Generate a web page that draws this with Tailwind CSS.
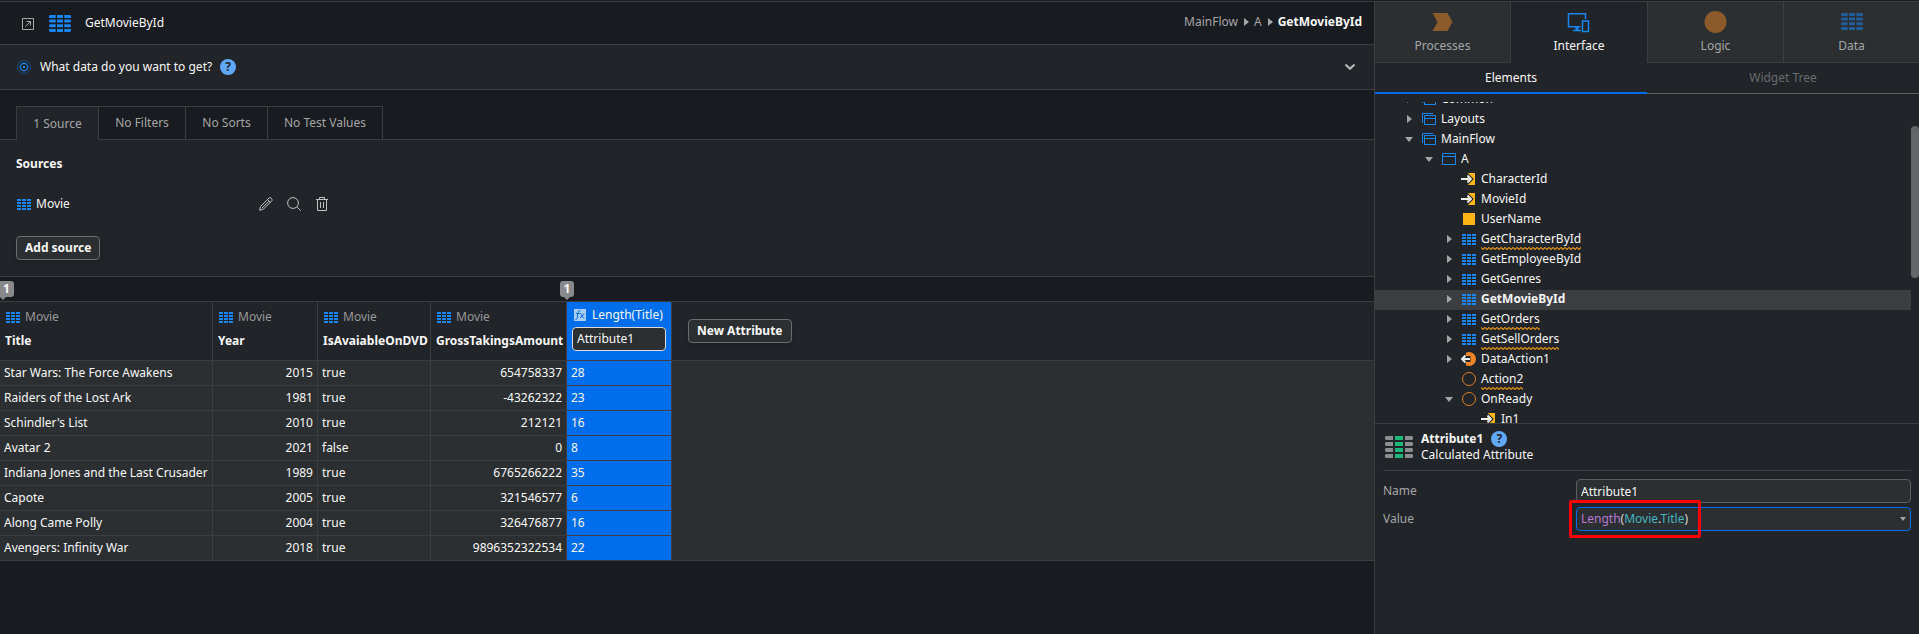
<!DOCTYPE html>
<html lang="en">
<head>
<meta charset="utf-8">
<title>GetMovieById</title>
<script src="https://cdn.jsdelivr.net/npm/@tailwindcss/browser@4"></script>
</head>
<body class="bg-[#181b1f] font-['Noto_Sans',sans-serif] text-xs leading-4 text-[#f8f8f8]">

<svg class="absolute size-0" aria-hidden="true">
  <symbol id="grid" viewBox="0 0 14 11" preserveAspectRatio="none">
    <path d="M0 0h4v2H0zM5 0h4v2H5zM10 0h4v2h-4zM0 3h4v2H0zM5 3h4v2H5zM10 3h4v2h-4zM0 6h4v2H0zM5 6h4v2H5zM10 6h4v2h-4zM0 9h4v2H0zM5 9h4v2H5zM10 9h4v2h-4z" fill="currentColor"/>
  </symbol>
  <symbol id="grid-lg" viewBox="0 0 22 17">
    <g fill="currentColor">
      <path d="M1 0h5.700v3H0V1zM8 0h6v3H8zM15.300 0H21l1 1v2h-6.700zM0 14h6.700v3H1l-1-1zM8 14h6v3H8zM15.300 14H22v2l-1 1h-5.700z"/>
      <path d="M0 5.500l1-1h5.700v3H1l-1-1zM8 4.500h6v3H8zM15.300 4.500H21l1 1v1l-1 1h-5.700zM0 10.300l1-1h5.700v3H1l-1-1zM8 9.300h6v3H8zM15.300 9.300H21l1 1v1l-1 1h-5.700z"/>
    </g>
  </symbol>
  <symbol id="flow" viewBox="0 0 14 14"><path d="M.5 11V1.500H11M2.500 3.500h11v9h-11zM2.500 6.500h11" fill="none" stroke="#1a86f2"/></symbol>
  <symbol id="screen" viewBox="0 0 14 14"><path d="M.5 1.500h13v11H.5zM.5 4.500h13" fill="none" stroke="#1a86f2"/></symbol>
  <symbol id="input" viewBox="0 0 14 14" overflow="visible">
    <path d="M5 1h8v12H5z" fill="#fdb515"/>
    <path d="M4.500 2 9.500 7l-5 5" fill="none" stroke="#212428" stroke-width="3.200"/>
    <path d="M-1 7h10M5.500 3.500 9 7l-3.500 3.500" fill="none" stroke="#f0f0f0" stroke-width="1.800"/>
  </symbol>
  <symbol id="local" viewBox="0 0 14 14"><path d="M1 1h12v12H1z" fill="#fdb515"/></symbol>
  <symbol id="dataaction" viewBox="0 0 14 14" overflow="visible">
    <circle cx="7" cy="7" r="7" fill="#f08426"/>
    <path d="M-2 0h6v4h4.500v6H4v4h-6z" fill="#212428"/>
    <path d="M0 7h8M3.500 3.500 0 7l3.500 3.500" fill="none" stroke="#f0f0f0" stroke-width="2"/>
  </symbol>
  <symbol id="action" viewBox="0 0 14 14"><circle cx="7" cy="7" r="6.500" fill="none" stroke="#e07f28"/></symbol>
  <symbol id="closed" viewBox="0 0 8 8"><path d="M2 0l5 4-5 4z" fill="#a5a6a8"/></symbol>
  <symbol id="open" viewBox="0 0 8 8"><path d="M0 2h8L4 7z" fill="#a5a6a8"/></symbol>
  <pattern id="wave" width="4" height="3" patternUnits="userSpaceOnUse"><path d="M-1 -.5l3 3 3-3" fill="none" stroke="#d98b18" stroke-width="1.200"/></pattern>
</svg>

<div class="flex h-screen border-t border-[#181b1f]">
  <main class="min-w-0 flex-1 border-t border-[#3c3d40]">
    <header class="flex h-[43px] items-center border-b border-[#3c3d40] pr-3 pl-[22px]">
      <button aria-label="Collapse" class="mt-px"><svg class="size-3" viewBox="0 0 12 12" fill="none" stroke="#a5a6a8"><path d="M.5.5h11v11H.5zM3.500 8.500l5-5M4.500 3.500h4v4"/></svg></button>
      <svg class="ml-[15px] h-[17px] w-[22px] text-[#1a86f2]"><use href="#grid-lg"/></svg>
      <h1 class="ml-3.5">GetMovieById</h1>
      <nav class="ml-auto flex items-center gap-1 pb-0.5 text-[#a5a6a8]" aria-label="Breadcrumb">
        <a href="#">MainFlow</a>
        <svg class="size-2"><use href="#closed"/></svg>
        <a href="#">A</a>
        <svg class="size-2"><use href="#closed"/></svg>
        <a href="#" class="font-bold text-[#f8f8f8]">GetMovieById</a>
      </nav>
    </header>

    <section class="flex h-[45px] items-center border-b border-[#3c3d40] bg-[#212428] pr-[18px] pl-[17px]">
      <svg class="size-3.5" viewBox="0 0 14 14" fill="none" stroke="#1a86f2"><circle cx="7" cy="7" r="6.500" opacity=".45"/><circle cx="7" cy="7" r="3.700" stroke-width="1.200"/><circle cx="7" cy="7" r="1.200" fill="#1a86f2" stroke="none"/></svg>
      <h2 class="ml-[9px]">What data do you want to get?</h2>
      <button aria-label="Help" class="ml-2 size-4 rounded-full bg-[#62a8f8] font-bold text-[#212428]">?</button>
      <button aria-label="Expand" class="ml-auto"><svg class="h-2 w-3" viewBox="0 0 12 8" fill="none" stroke="#b4b5b7" stroke-width="2.200"><path d="M1.500 1.500 6 5.800l4.500-4.300"/></svg></button>
    </section>

    <div class="flex h-[50px] items-end pt-4 text-[#a5a6a8]" role="tablist">
      <div class="h-px w-4 bg-[#3c3d40]"></div>
      <button role="tab" aria-selected="true" class="h-[34px] w-[82px] border-t border-l border-[#3c3d40] bg-[#212428]">1 Source</button>
      <button role="tab" class="h-[34px] w-[87px] border border-r-0 border-[#3c3d40]">No Filters</button>
      <button role="tab" class="h-[34px] w-[82px] border border-r-0 border-[#3c3d40]">No Sorts</button>
      <button role="tab" class="h-[34px] w-[116px] border border-[#3c3d40]">No Test Values</button>
      <div class="h-px flex-1 bg-[#3c3d40]"></div>
    </div>

    <section class="border-b border-[#3c3d40] bg-[#212428] px-4 pt-4 pb-4">
      <h3 class="font-bold">Sources</h3>
      <div class="mt-6 flex h-4 items-center">
        <svg class="ml-px h-[11px] w-3.5 text-[#1a86f2]"><use href="#grid"/></svg>
        <span class="ml-[5px] w-[223px]">Movie</span>
        <span class="flex gap-3.5 text-[#c0c1c3]">
          <button aria-label="Edit"><svg class="size-3.5" viewBox="0 0 14 14" fill="none" stroke="currentColor"><path d="M.7 13.300l.8-3.800L10 1q1-1 2.200.2t.8 2.400l-8.500 8.500zM8.500 2.500l3 3M10 4.200l-7 7"/></svg></button>
          <button aria-label="Preview"><svg class="size-3.5" viewBox="0 0 14 14" fill="none" stroke="currentColor"><circle cx="6" cy="6" r="5.400"/><path d="M9.900 9.900l3.700 3.700"/></svg></button>
          <button aria-label="Delete"><svg class="size-3.5" viewBox="0 0 14 14" fill="none" stroke="currentColor"><path d="M1 2.500h12M2.500 2.500v11h9v-11M4.500 2.500v-2h5v2M5.500 5v6M8.500 5v6"/></svg></button>
        </span>
      </div>
      <button class="mt-6 h-6 rounded border border-[#6a6c6e] bg-[#2b2f31] px-2 font-bold shadow-md">Add source</button>
    </section>

    <div class="relative h-[25px] border-b border-[#3c3d40]">
      <div class="absolute top-1 left-0 h-5 w-3.5">
        <svg class="absolute inset-0 h-5 w-3.5" viewBox="0 0 14 20"><path d="M0 0h10.500q3.500 0 3.500 3v10q0 3-3 3H6l-3 3-3-3z" fill="#87898c"/></svg>
        <span class="relative block pr-px text-center font-bold">1</span>
      </div>
      <div class="absolute top-1 left-[560px] h-5 w-3.5">
        <svg class="absolute inset-0 h-5 w-3.5" viewBox="0 0 14 20"><path d="M3 0h8q3 0 3 3v10q0 3-3 3h-1l-3 3-3-3H3q-3 0-3-3V3q0-3 3-3z" fill="#87898c"/></svg>
        <span class="relative block text-center font-bold">1</span>
      </div>
    </div>

    <table class="w-full table-fixed border-separate border-spacing-0 [&_td]:border-r [&_td]:border-b [&_td]:border-[#3c3d40] [&_td]:px-1 [&_th]:border-b [&_th]:border-[#3c3d40]">
      <colgroup><col class="w-[213px]"><col class="w-[105px]"><col class="w-[113px]"><col class="w-[136px]"><col class="w-[105px]"><col></colgroup>
      <thead class="bg-[#212428] text-left align-top">
        <tr class="h-[59px]">
          <th class="border-r px-[5px] pt-[7px]"><div class="flex items-center gap-[5px] pl-px font-normal text-[#97989a]"><svg class="h-[11px] w-3.5 text-[#1a86f2]"><use href="#grid"/></svg>Movie</div><div class="mt-2">Title</div></th>
          <th class="border-r px-[5px] pt-[7px]"><div class="flex items-center gap-[5px] pl-px font-normal text-[#97989a]"><svg class="h-[11px] w-3.5 text-[#1a86f2]"><use href="#grid"/></svg>Movie</div><div class="mt-2">Year</div></th>
          <th class="border-r px-[5px] pt-[7px]"><div class="flex items-center gap-[5px] pl-px font-normal text-[#97989a]"><svg class="h-[11px] w-3.5 text-[#1a86f2]"><use href="#grid"/></svg>Movie</div><div class="mt-2">IsAvaiableOnDVD</div></th>
          <th class="border-r px-[5px] pt-[7px]"><div class="flex items-center gap-[5px] pl-px font-normal text-[#97989a]"><svg class="h-[11px] w-3.5 text-[#1a86f2]"><use href="#grid"/></svg>Movie</div><div class="mt-2">GrossTakingsAmount</div></th>
          <th class="border-r bg-[#006eea] px-[5px] pt-[5px] font-normal">
            <div class="flex items-center gap-1.5 pl-0.5"><svg class="size-3" viewBox="0 0 12 12" fill="none" stroke="#006eea"><path d="M0 0h12v12H0z" fill="#a9cdf8" stroke="none"/><path d="M1.500 10.500q1.200.3 1.600-1.300l1.100-5.700Q4.700 1 6.300 1.600M2 4.500h3.700M6.300 4.500q1-.3 1.400 1l.9 2.500q.5 1.300 1.700.8M10.300 4.500 6 9"/></svg>Length(Title)</div>
            <input aria-label="Attribute name" value="Attribute1" class="mt-1 block h-6 w-full rounded border border-[#d8dadd] bg-[#2b2f31] px-1 pb-0.5">
          </th>
          <th class="pt-[17px] pl-4"><button class="h-6 rounded border border-[#6a6c6e] bg-[#2b2f31] px-2 font-bold shadow-md">New Attribute</button></th>
        </tr>
      </thead>
      <tbody class="bg-[#2b2f31]">
        <tr class="h-[25px]"><td>Star Wars: The Force Awakens</td><td class="text-right">2015</td><td>true</td><td class="text-right">654758337</td><td class="bg-[#006eea]">28</td><td rowspan="8" class="border-r-0!"></td></tr>
        <tr class="h-[25px]"><td>Raiders of the Lost Ark</td><td class="text-right">1981</td><td>true</td><td class="text-right">-43262322</td><td class="bg-[#006eea]">23</td></tr>
        <tr class="h-[25px]"><td>Schindler's List</td><td class="text-right">2010</td><td>true</td><td class="text-right">212121</td><td class="bg-[#006eea]">16</td></tr>
        <tr class="h-[25px]"><td>Avatar 2</td><td class="text-right">2021</td><td>false</td><td class="text-right">0</td><td class="bg-[#006eea]">8</td></tr>
        <tr class="h-[25px]"><td class="whitespace-nowrap">Indiana Jones and the Last Crusader</td><td class="text-right">1989</td><td>true</td><td class="text-right">6765266222</td><td class="bg-[#006eea]">35</td></tr>
        <tr class="h-[25px]"><td>Capote</td><td class="text-right">2005</td><td>true</td><td class="text-right">321546577</td><td class="bg-[#006eea]">6</td></tr>
        <tr class="h-[25px]"><td>Along Came Polly</td><td class="text-right">2004</td><td>true</td><td class="text-right">326476877</td><td class="bg-[#006eea]">16</td></tr>
        <tr class="h-[25px]"><td>Avengers: Infinity War</td><td class="text-right">2018</td><td>true</td><td class="text-right">9896352322534</td><td class="bg-[#006eea]">22</td></tr>
      </tbody>
    </table>
  </main>

  <aside class="flex w-[545px] shrink-0 flex-col border-t border-l border-[#3c3d40] bg-[#212428]">
    <div class="grid h-[61px] shrink-0 grid-cols-4 text-[#a5a6a8]" role="tablist">
      <button role="tab" class="flex flex-col items-center border-r border-b border-[#3c3d40] bg-[#2b2f31] pt-2">
        <svg class="size-6" viewBox="0 0 24 24"><path d="M1.500 3h15l5 9-5 9h-15l5-9z" fill="#8d5a2c"/></svg><span class="mt-1">Processes</span></button>
      <button role="tab" aria-selected="true" class="flex flex-col items-center pt-2 text-[#f8f8f8]">
        <svg class="size-6" viewBox="0 0 24 24" fill="none" stroke="#1a86f2" stroke-width="1.500"><path d="M18.500 9V3.700H1.500v13h12M6 20.500h8"/><path d="M8.500 17h3v4h-3z" fill="#1a86f2" stroke="none"/><path d="M15.500 11h6v10.500h-6z"/></svg><span class="mt-1">Interface</span></button>
      <button role="tab" class="flex flex-col items-center border-b border-l border-[#3c3d40] bg-[#2b2f31] pt-2">
        <svg class="size-6" viewBox="0 0 24 24"><circle cx="11.500" cy="12" r="11" fill="#8d5a2c"/></svg><span class="mt-1">Logic</span></button>
      <button role="tab" class="flex flex-col items-center border-b border-l border-[#3c3d40] bg-[#2b2f31] pt-[11px]">
        <svg class="h-[17px] w-[22px] text-[#215d9b]"><use href="#grid-lg"/></svg><span class="mt-2">Data</span></button>
    </div>
    <div class="grid h-[31px] shrink-0 grid-cols-2" role="tablist">
      <button role="tab" aria-selected="true" class="border-b-2 border-[#006eea]">Elements</button>
      <button role="tab" class="border-b border-[#5c5e60] text-[#6a6c6e]">Widget Tree</button>
    </div>

    <div class="relative mt-2 min-h-0 flex-1 overflow-hidden pr-2">
      <ul class="-mt-3 [&_.ic]:ml-[3px] [&_.ic]:size-3.5 [&_.ic]:overflow-visible [&_.tb]:ml-[3px] [&_.tb]:h-[11px] [&_.tb]:w-3.5 [&_.tb]:text-[#1a86f2] [&_.tw]:mx-1.5 [&_.tw]:size-2 [&_li]:flex [&_li]:h-5 [&_li]:items-center [&_li]:pb-0.5 [&_li>span]:ml-[5px]">
        <li class="pl-6"><svg class="tw"><use href="#closed"/></svg><svg class="ic"><use href="#flow"/></svg><span>Common</span></li>
        <li class="pl-6"><svg class="tw"><use href="#closed"/></svg><svg class="ic"><use href="#flow"/></svg><span>Layouts</span></li>
        <li class="pl-6"><svg class="tw"><use href="#open"/></svg><svg class="ic"><use href="#flow"/></svg><span>MainFlow</span></li>
        <li class="pl-11"><svg class="tw"><use href="#open"/></svg><svg class="ic"><use href="#screen"/></svg><span>A</span></li>
        <li class="pl-[84px]"><svg class="ic"><use href="#input"/></svg><span>CharacterId</span></li>
        <li class="pl-[84px]"><svg class="ic"><use href="#input"/></svg><span>MovieId</span></li>
        <li class="pl-[84px]"><svg class="ic"><use href="#local"/></svg><span>UserName</span></li>
        <li class="pl-16"><svg class="tw"><use href="#closed"/></svg><svg class="tb"><use href="#grid"/></svg><span class="relative">GetCharacterById<svg class="absolute -bottom-[3px] left-0 h-[3px] w-full"><rect width="100%" height="3" fill="url(#wave)"/></svg></span></li>
        <li class="pl-16"><svg class="tw"><use href="#closed"/></svg><svg class="tb"><use href="#grid"/></svg><span>GetEmployeeById</span></li>
        <li class="pl-16"><svg class="tw"><use href="#closed"/></svg><svg class="tb"><use href="#grid"/></svg><span>GetGenres</span></li>
        <li class="bg-[#3c3d40] pl-16 font-bold"><svg class="tw"><use href="#closed"/></svg><svg class="tb"><use href="#grid"/></svg><span>GetMovieById</span></li>
        <li class="pl-16"><svg class="tw"><use href="#closed"/></svg><svg class="tb"><use href="#grid"/></svg><span class="relative">GetOrders<svg class="absolute -bottom-[3px] left-0 h-[3px] w-full"><rect width="100%" height="3" fill="url(#wave)"/></svg></span></li>
        <li class="pl-16"><svg class="tw"><use href="#closed"/></svg><svg class="tb"><use href="#grid"/></svg><span class="relative">GetSellOrders<svg class="absolute -bottom-[3px] left-0 h-[3px] w-full"><rect width="100%" height="3" fill="url(#wave)"/></svg></span></li>
        <li class="pl-16"><svg class="tw"><use href="#closed"/></svg><svg class="ic"><use href="#dataaction"/></svg><span>DataAction1</span></li>
        <li class="pl-[84px]"><svg class="ic"><use href="#action"/></svg><span class="relative">Action2<svg class="absolute -bottom-[3px] left-0 h-[3px] w-full"><rect width="100%" height="3" fill="url(#wave)"/></svg></span></li>
        <li class="pl-16"><svg class="tw"><use href="#open"/></svg><svg class="ic"><use href="#action"/></svg><span>OnReady</span></li>
        <li class="pl-[104px]"><svg class="ic"><use href="#input"/></svg><span>In1</span></li>
      </ul>
      <div class="absolute top-6 right-0 h-[152px] w-2 rounded-full bg-[#636567]"></div>
    </div>

    <section class="h-[211px] shrink-0 border-t border-[#3c3d40] px-2 pt-[7px]">
      <div class="flex items-center border-b border-[#3c3d40] pb-[7px]">
        <svg class="ml-0.5 h-[22px] w-7" viewBox="0 0 28 22"><path d="M1 0h7v4H1L0 3V1zM20 0h7l1 1v2l-1 1h-7zM1 6h7v4H1L0 9V7zM20 6h7l1 1v2l-1 1h-7zM1 12h7v4H1l-1-1v-2zM20 12h7l1 1v2l-1 1h-7zM1 18h7v4H1l-1-1v-2zM20 18h7l1 1v2l-1 1h-7z" fill="#8b8d90"/><path d="M10 0h8v4h-8zM10 6h8v4h-8zM10 12h8v4h-8zM10 18h8v4h-8z" fill="#1cb87a"/></svg>
        <div class="ml-2">
          <div class="flex items-center gap-2 font-bold">Attribute1<button aria-label="Help" class="size-4 rounded-full bg-[#62a8f8] text-[#212428]">?</button></div>
          <div>Calculated Attribute</div>
        </div>
      </div>
      <div class="mt-2 grid grid-cols-[193px_1fr] items-center gap-y-1 text-[#a5a6a8]">
        <label for="name">Name</label>
        <input id="name" value="Attribute1" class="h-6 rounded border border-[#5c5e60] bg-[#2b2f31] px-1 text-[#f8f8f8]">
        <span id="value-label">Value</span>
        <div class="relative">
          <button role="combobox" aria-labelledby="value-label" aria-expanded="false" class="flex h-6 w-full items-center justify-between rounded border border-[#006eea] bg-[#2b2f31] px-1 text-[#d8dadd]"><span><span class="text-[#b877d2]">Length</span>(<span class="text-[#45b5c0]">Movie</span>.<span class="text-[#45b5c0]">Title</span>)</span><svg class="h-1 w-1.5" viewBox="0 0 6 4"><path d="M0 0h6L3 4z" fill="#a5a6a8"/></svg></button>
          <div class="pointer-events-none absolute -top-[7px] -left-[7px] h-[38px] w-[132px] rounded-xs border-3 border-[#ff0000]"></div>
        </div>
      </div>
    </section>
  </aside>
</div>
</body>
</html>
